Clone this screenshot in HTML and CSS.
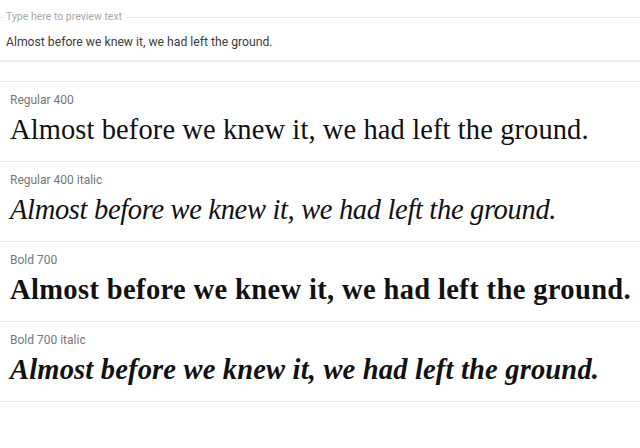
FILE: index.html
```html
<!DOCTYPE html>
<html lang="en">
<head>
<meta charset="utf-8">
<title>Styles preview</title>
<link rel="stylesheet" href="styles.css">
</head>
<body>
<div class="preview">
  <div class="legend-row"><span class="legend">Type here to preview text</span></div>
  <div class="preview-input">Almost before we knew it, we had left the ground.</div>
</div>
<div class="specimens">
  <div class="row">
    <div class="label">Regular 400</div>
    <div class="sample regular">Almost before we knew it, we had left the ground.</div>
  </div>
  <div class="row">
    <div class="label">Regular 400 italic</div>
    <div class="sample italic">Almost before we knew it, we had left the ground.</div>
  </div>
  <div class="row">
    <div class="label">Bold 700</div>
    <div class="sample bold">Almost before we knew it, we had left the ground.</div>
  </div>
  <div class="row">
    <div class="label">Bold 700 italic</div>
    <div class="sample bold-italic">Almost before we knew it, we had left the ground.</div>
  </div>
</div>
</body>
</html>
```
FILE: styles.css
```css
html, body {
  margin: 0;
  padding: 0;
  background: #fff;
}
body {
  font-family: Roboto, "Liberation Sans", sans-serif;
  width: 640px;
  overflow: hidden;
}
.preview {
  padding-top: 10px;
}
.legend-row {
  display: flex;
  align-items: center;
  height: 14px;
}
.legend-row::before {
  content: "";
  width: 3px;
  height: 1px;
  background: #e8e8e8;
}
.legend-row::after {
  content: "";
  flex: 1;
  height: 1px;
  background: #e8e8e8;
}
.legend {
  font-size: 10.5px;
  color: #a8a8a8;
  padding: 0 4px 0 3px;
  line-height: 14px;
}
.preview-input {
  font-size: 12.2px;
  color: #3c3c3c;
  padding: 11px 6px 0;
  height: 25px;
  line-height: 14px;
  border-bottom: 2px solid #eeeeee;
}
.specimens {
  margin-top: 19px;
  border-top: 1px solid #e6e6e6;
}
.row {
  box-sizing: border-box;
  height: 80px;
  padding: 11px 10px 0;
  border-bottom: 1px solid #e6e6e6;
}
.label {
  font-size: 12px;
  line-height: 14px;
  color: #777;
}
.sample {
  margin-top: 6px;
  font-family: "Liberation Serif", "DejaVu Serif", serif;
  font-size: 28.5px;
  line-height: 34px;
  color: #111;
  white-space: nowrap;
}
.regular { letter-spacing: 0.1px; }
.italic { font-style: italic; letter-spacing: -0.33px; }
.bold { font-weight: 700; letter-spacing: 0.37px; }
.bold-italic { font-weight: 700; font-style: italic; letter-spacing: 0.18px; }
```
